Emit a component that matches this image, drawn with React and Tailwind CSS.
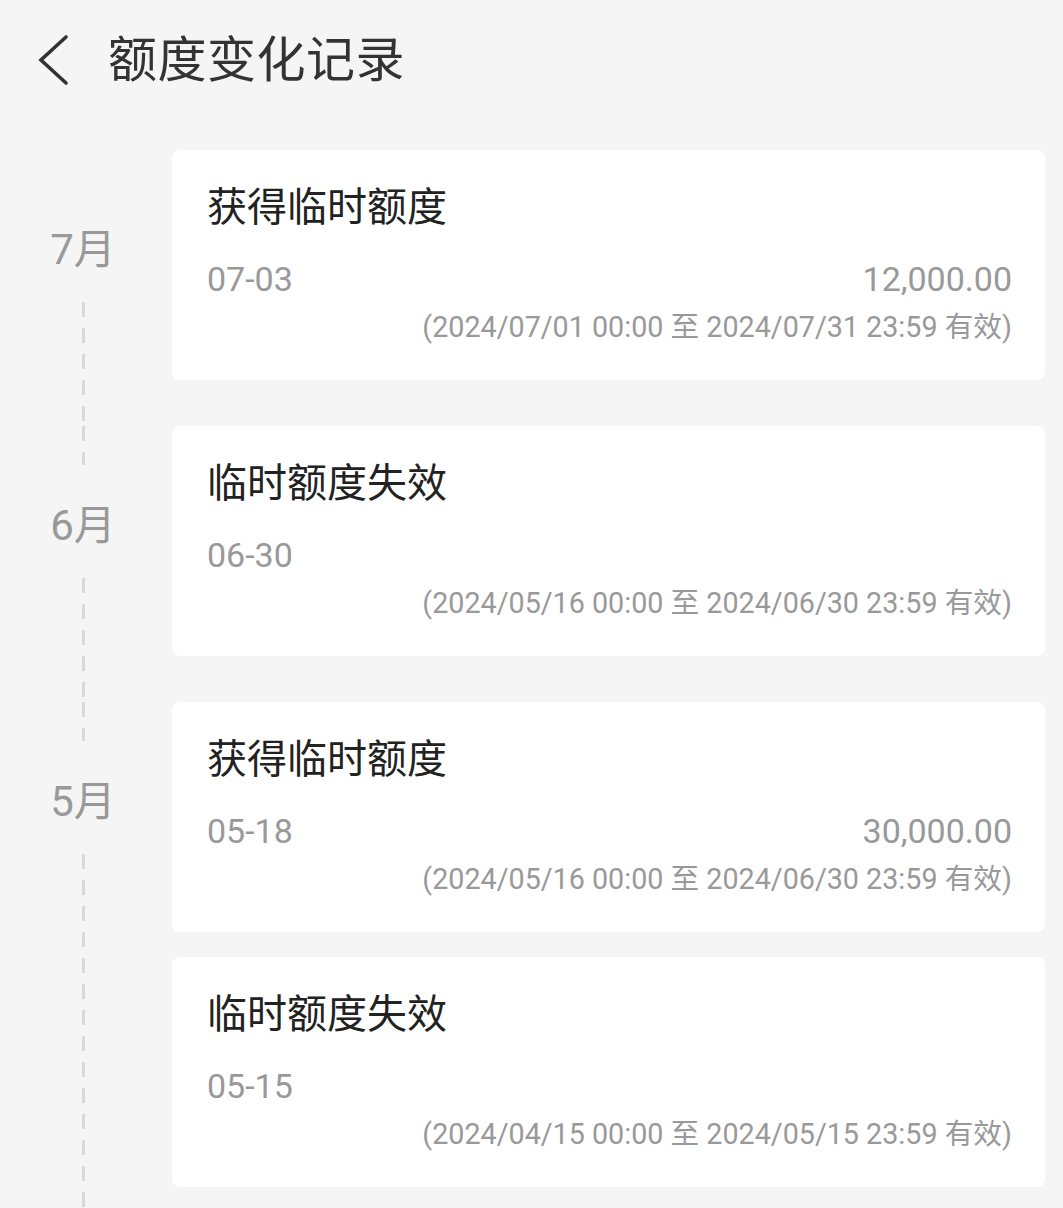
import React from 'react';

const groups = [
  {
    month: '7月',
    items: [
      {
        title: '获得临时额度',
        date: '07-03',
        amount: '12,000.00',
        range: '(2024/07/01 00:00 至 2024/07/31 23:59 有效)',
      },
    ],
  },
  {
    month: '6月',
    items: [
      {
        title: '临时额度失效',
        date: '06-30',
        amount: '',
        range: '(2024/05/16 00:00 至 2024/06/30 23:59 有效)',
      },
    ],
  },
  {
    month: '5月',
    items: [
      {
        title: '获得临时额度',
        date: '05-18',
        amount: '30,000.00',
        range: '(2024/05/16 00:00 至 2024/06/30 23:59 有效)',
      },
      {
        title: '临时额度失效',
        date: '05-15',
        amount: '',
        range: '(2024/04/15 00:00 至 2024/05/15 23:59 有效)',
      },
    ],
  },
];

const dash =
  'w-[3px] bg-[linear-gradient(to_bottom,#d9d9d9_58%,transparent_58%)] bg-[length:3px_26px] bg-repeat-y';

const RecordCard = ({ item }) => (
  <div className="bg-white rounded-[8px] pt-[32px] pb-[33px] pl-[35px] pr-[33px]">
    <div className="text-[40px] leading-[52px] text-[#222]">{item.title}</div>
    <div className="mt-[23px] flex items-center justify-between h-[44px] text-[34px] text-[#999]">
      <span>{item.date}</span>
      <span>{item.amount}</span>
    </div>
    <div className="mt-[6px] h-[40px] leading-[40px] text-right text-[28.7px] text-[#999]">
      {item.range}
    </div>
  </div>
);

const App = () => {
  return (
    <div className="min-h-[1208px] bg-[#f5f5f5] font-['Roboto','Noto_Sans_CJK_SC',sans-serif] overflow-hidden">
      {/* Header */}
      <div className="h-[120px] flex items-center">
        <svg className="ml-[36px]" width="34" height="52" viewBox="0 0 34 52" fill="none">
          <path d="M30 3 L5 26 L30 49" stroke="#333" strokeWidth="3.6" strokeLinecap="round" strokeLinejoin="miter" />
        </svg>
        <h1 className="ml-[38px] text-[49px] leading-none text-[#333] tracking-[0.5px]">额度变化记录</h1>
      </div>

      {/* Timeline */}
      <div className="pt-[30px] pr-[18px]">
        {groups.map((group, gi) => (
          <div key={group.month} className="flex">
            <div className="w-[172px] shrink-0 flex flex-col items-center pr-[6px]">
              <div className={`h-[39px] ${gi === 0 ? 'w-[3px]' : dash}`}></div>
              <div className="mt-[39px] h-[44px] leading-[44px] text-[42px] text-[#999]">{group.month}</div>
              <div className={`mt-[30px] flex-1 ${dash}`}></div>
            </div>
            <div className="flex-1 flex flex-col gap-[25px] pb-[46px]">
              {group.items.map((item, i) => (
                <RecordCard key={i} item={item} />
              ))}
            </div>
          </div>
        ))}
      </div>
    </div>
  );
};

export default App;
